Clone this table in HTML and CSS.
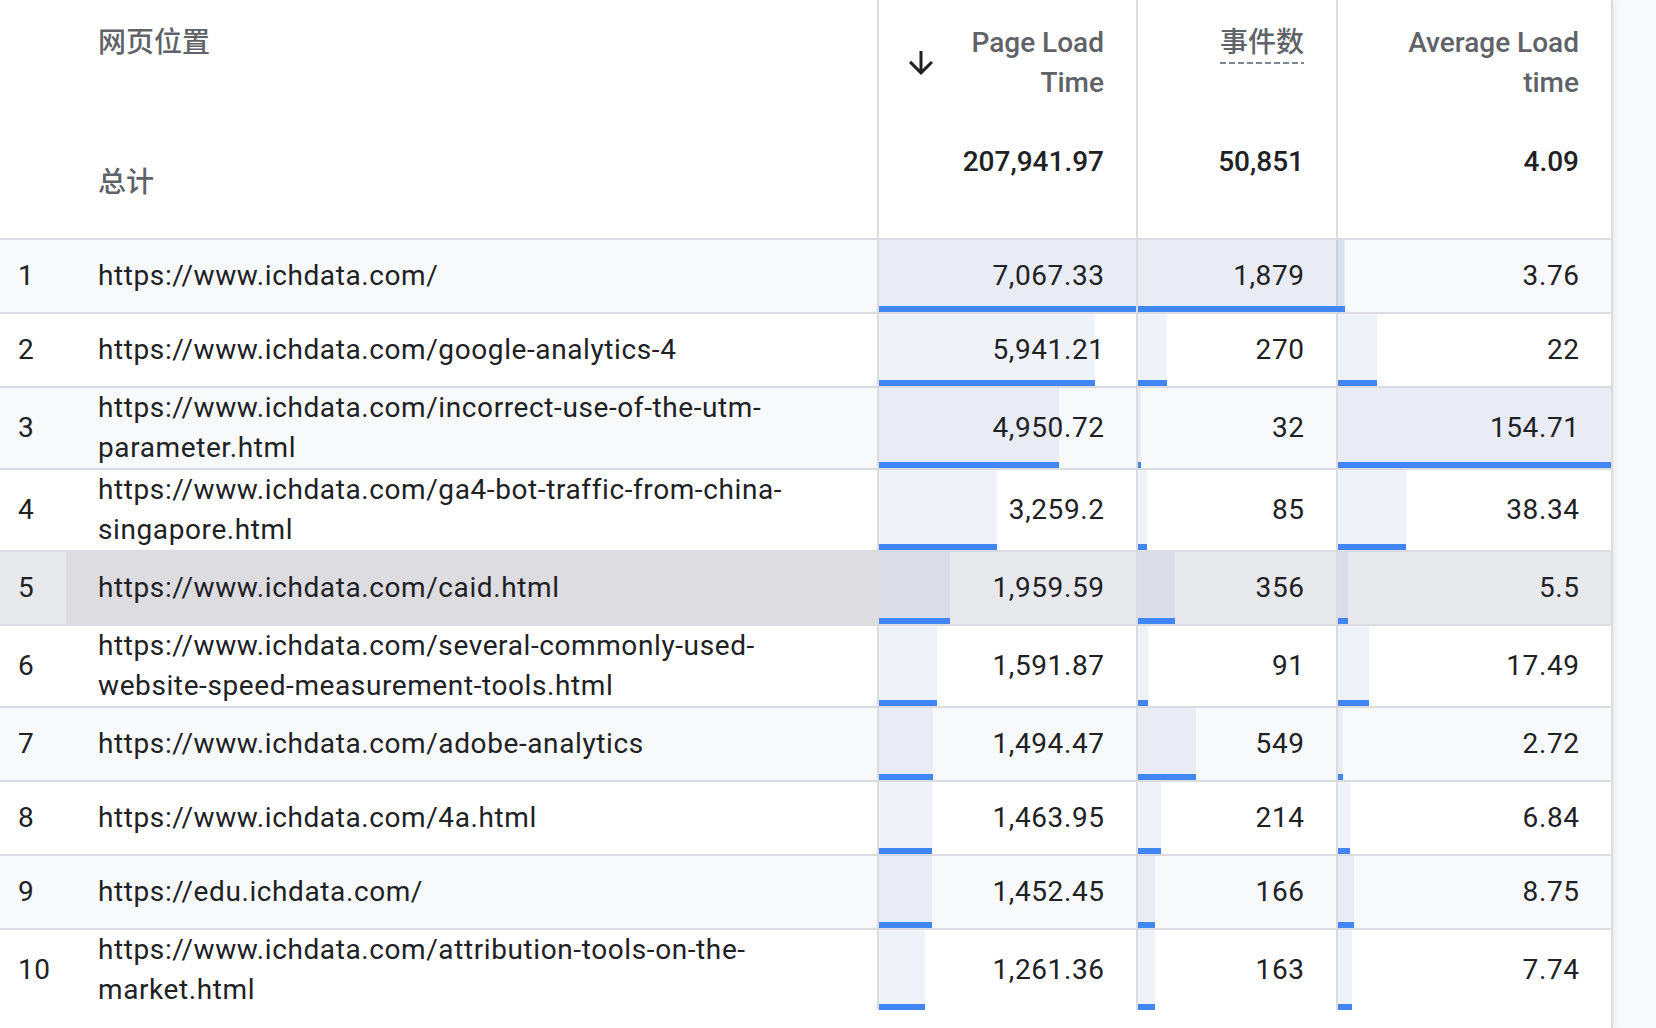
FILE: index.html
```html
<!DOCTYPE html>
<html lang="zh-CN">
<head>
<meta charset="utf-8">
<title>网页位置 - Page Load Time</title>
<link rel="stylesheet" href="styles.css">
</head>
<body>
<div class="report">
  <div class="thead">
    <div class="th th-dim">
      <span class="dim-label">网页位置</span>
      <span class="dim-total">总计</span>
    </div>
    <div class="th th-metric th-sorted">
      <div class="th-top">
        <svg class="sort-icon" viewBox="0 0 24 24" width="36" height="36"><path d="M20 12l-1.41-1.41L13 16.17V4h-2v12.17l-5.58-5.59L4 12l8 8 8-8z"/></svg>
        <span class="th-label">Page Load Time</span>
      </div>
      <div class="th-total">207,941.97</div>
    </div>
    <div class="th th-metric">
      <div class="th-top"><span class="th-label th-dashed">事件数</span></div>
      <div class="th-total">50,851</div>
    </div>
    <div class="th th-metric">
      <div class="th-top"><span class="th-label">Average Load time</span></div>
      <div class="th-total">4.09</div>
    </div>
  </div>

  <div class="row row-alt">
    <div class="cell num">1</div>
    <div class="cell dim">https://www.ichdata.com/</div>
    <div class="cell metric"><span class="fill" style="width:100%"></span><span class="val">7,067.33</span></div>
    <div class="cell metric"><span class="fill" style="width:104%"></span><span class="val">1,879</span></div>
    <div class="cell metric"><span class="fill" style="width:2.4%"></span><span class="val">3.76</span></div>
  </div>
  <div class="row">
    <div class="cell num">2</div>
    <div class="cell dim">https://www.ichdata.com/google-analytics-4</div>
    <div class="cell metric"><span class="fill" style="width:84.1%"></span><span class="val">5,941.21</span></div>
    <div class="cell metric"><span class="fill" style="width:14.4%"></span><span class="val">270</span></div>
    <div class="cell metric"><span class="fill" style="width:14.2%"></span><span class="val">22</span></div>
  </div>
  <div class="row row-alt">
    <div class="cell num">3</div>
    <div class="cell dim">https://www.ichdata.com/incorrect-use-of-the-utm-parameter.html</div>
    <div class="cell metric"><span class="fill" style="width:70.1%"></span><span class="val">4,950.72</span></div>
    <div class="cell metric"><span class="fill" style="width:1.7%"></span><span class="val">32</span></div>
    <div class="cell metric"><span class="fill" style="width:100%"></span><span class="val">154.71</span></div>
  </div>
  <div class="row">
    <div class="cell num">4</div>
    <div class="cell dim">https://www.ichdata.com/ga4-bot-traffic-from-china-singapore.html</div>
    <div class="cell metric"><span class="fill" style="width:46.1%"></span><span class="val">3,259.2</span></div>
    <div class="cell metric"><span class="fill" style="width:4.5%"></span><span class="val">85</span></div>
    <div class="cell metric"><span class="fill" style="width:24.8%"></span><span class="val">38.34</span></div>
  </div>
  <div class="row row-hover">
    <div class="cell num">5</div>
    <div class="cell dim">https://www.ichdata.com/caid.html</div>
    <div class="cell metric"><span class="fill" style="width:27.7%"></span><span class="val">1,959.59</span></div>
    <div class="cell metric"><span class="fill" style="width:18.9%"></span><span class="val">356</span></div>
    <div class="cell metric"><span class="fill" style="width:3.6%"></span><span class="val">5.5</span></div>
  </div>
  <div class="row">
    <div class="cell num">6</div>
    <div class="cell dim">https://www.ichdata.com/several-commonly-used-website-speed-measurement-tools.html</div>
    <div class="cell metric"><span class="fill" style="width:22.5%"></span><span class="val">1,591.87</span></div>
    <div class="cell metric"><span class="fill" style="width:4.8%"></span><span class="val">91</span></div>
    <div class="cell metric"><span class="fill" style="width:11.3%"></span><span class="val">17.49</span></div>
  </div>
  <div class="row row-alt">
    <div class="cell num">7</div>
    <div class="cell dim">https://www.ichdata.com/adobe-analytics</div>
    <div class="cell metric"><span class="fill" style="width:21.1%"></span><span class="val">1,494.47</span></div>
    <div class="cell metric"><span class="fill" style="width:29.2%"></span><span class="val">549</span></div>
    <div class="cell metric"><span class="fill" style="width:1.8%"></span><span class="val">2.72</span></div>
  </div>
  <div class="row">
    <div class="cell num">8</div>
    <div class="cell dim">https://www.ichdata.com/4a.html</div>
    <div class="cell metric"><span class="fill" style="width:20.7%"></span><span class="val">1,463.95</span></div>
    <div class="cell metric"><span class="fill" style="width:11.4%"></span><span class="val">214</span></div>
    <div class="cell metric"><span class="fill" style="width:4.4%"></span><span class="val">6.84</span></div>
  </div>
  <div class="row row-alt">
    <div class="cell num">9</div>
    <div class="cell dim">https://edu.ichdata.com/</div>
    <div class="cell metric"><span class="fill" style="width:20.6%"></span><span class="val">1,452.45</span></div>
    <div class="cell metric"><span class="fill" style="width:8.8%"></span><span class="val">166</span></div>
    <div class="cell metric"><span class="fill" style="width:5.7%"></span><span class="val">8.75</span></div>
  </div>
  <div class="row row-last">
    <div class="cell num">10</div>
    <div class="cell dim">https://www.ichdata.com/attribution-tools-on-the-market.html</div>
    <div class="cell metric"><span class="fill" style="width:17.8%"></span><span class="val">1,261.36</span></div>
    <div class="cell metric"><span class="fill" style="width:8.7%"></span><span class="val">163</span></div>
    <div class="cell metric"><span class="fill" style="width:5%"></span><span class="val">7.74</span></div>
  </div>
</div>
</body>
</html>
```

FILE: styles.css
```css
* { box-sizing: border-box; }

html, body {
  margin: 0;
  padding: 0;
  background: #f8f9fa;
}

body {
  font-family: Roboto, "Noto Sans CJK SC", sans-serif;
  font-size: 28px;
  line-height: 40px;
  color: #202124;
  overflow: hidden;
}

.report {
  width: 1613px;
  min-height: 100vh;
  background: #ffffff;
  border-right: 2px solid #dadce0;
  box-shadow: 2px 0 6px rgba(60, 64, 67, 0.08);
}

.thead,
.row {
  display: grid;
  grid-template-columns: 66px 811px 259px 200px 275px;
}

/* ---------- header ---------- */
.thead {
  height: 240px;
  border-bottom: 2px solid #dadce0;
}

.th {
  display: flex;
  flex-direction: column;
  justify-content: space-between;
}

.th-dim {
  grid-column: 1 / span 2;
  align-items: flex-start;
  padding: 23px 0 35px 98px;
  color: #5f6368;
  font-weight: 500;
}

.th-metric {
  border-left: 2px solid #dadce0;
  padding: 23px 32px 56px 24px;
}

.th-sorted {
  padding-left: 24px;
}

.th-top {
  display: flex;
  align-items: center;
  justify-content: flex-end;
}

.sort-icon {
  flex: none;
  fill: #202124;
  margin-right: auto;
}

.th-label {
  color: #5f6368;
  font-weight: 500;
  text-align: right;
  max-width: 180px;
}

.th-dashed {
  padding-bottom: 1px;
  background-image: repeating-linear-gradient(to right, #80868b 0 6px, transparent 6px 9px);
  background-size: 100% 2px;
  background-position: left bottom;
  background-repeat: no-repeat;
}

.th-total {
  text-align: right;
  font-weight: 500;
  color: #202124;
}

/* ---------- rows ---------- */
.row {
  min-height: 74px;
  border-bottom: 2px solid #dadce0;
  background: #ffffff;
  letter-spacing: 0.6px;
}

.row-alt { background: #f8f9fa; }
.row-hover { background: #e8e9ed; }
.row-last { border-bottom: none; min-height: 80px; }

.cell {
  display: flex;
  align-items: center;
}

.num {
  padding-left: 18px;
}

.dim {
  padding: 0 50px 0 32px;
}

.row-hover .dim { background: #dcdce1; }

.metric {
  position: relative;
  justify-content: flex-end;
  padding-right: 32px;
  border-left: 2px solid #dadce0;
}

.fill {
  position: absolute;
  left: 0;
  top: 0;
  bottom: 0;
  z-index: 1;
  background: rgba(60, 90, 180, 0.08);
  border-bottom: 6px solid #4285f4;
}

.val {
  position: relative;
  z-index: 2;
  margin-right: -0.6px;
}
```
